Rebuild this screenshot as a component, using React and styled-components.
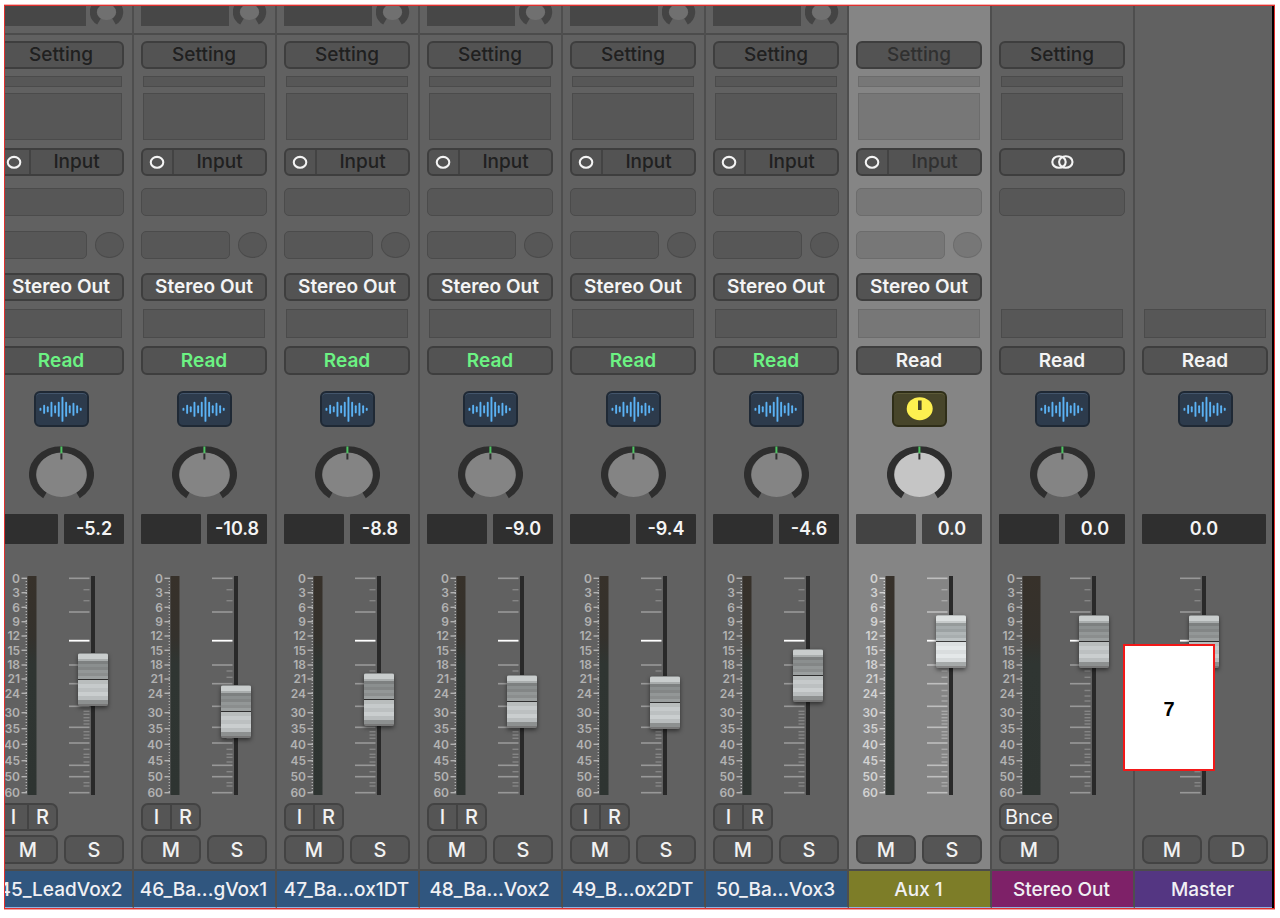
import React, { useState } from 'react';
import styled, { createGlobalStyle } from 'styled-components';

const GlobalStyle = createGlobalStyle`
  *, *::before, *::after {
    box-sizing: border-box;
  }

  body {
    margin: 0;
    background: #fff;
    font-family: Inter, 'Liberation Sans', sans-serif;
  }

  button, input {
    font-family: inherit;
    margin: 0;
    padding: 0;
  }
`;

const Page = styled.main`
  padding: 5px 5px 8px 4px;
`;

const Mixer = styled.div`
  display: flex;
  justify-content: flex-end;
  overflow: hidden;
  border: 1px solid #e0302e;
  box-shadow: 0 -1px 0 #f8b4b4, 0 1px 0 #f0a0a0;
  background: linear-gradient(#000, #000) right / 2px 100% no-repeat, #616161;
  padding-right: 2px;
`;

const StripBox = styled.section`
  flex: 1 0 ${props => (props.$last ? 137 : 143)}px;
  display: flex;
  flex-direction: column;
  background: ${props => (props.$selected ? '#858585' : '#616161')};
  border-right: ${props => (props.$last ? 'none' : '2px solid #4e4e4e')};
  border-bottom: 1px solid #8fb4e0;
`;

const SendArea = styled.div`
  display: flex;
  justify-content: space-between;
  height: 29px;
  padding: 0 8px 0 7px;
  border-bottom: 2px solid ${props => (props.$line ? '#4c4c4c' : 'transparent')};
`;

const SendSlot = styled.div`
  width: 88px;
  height: 20px;
  background: #474747;
`;

const Rack = styled.div`
  display: flex;
  flex-direction: column;
  padding: 6px ${props => (props.$last ? 4 : 8)}px 5px 7px;
`;

const Row = styled.div`
  display: ${props => (props.$split ? 'grid' : 'flex')};
  grid-template-columns: 1fr 1fr;
  gap: ${props => (props.$split ? 6 : 8)}px;
  justify-content: center;
  align-items: stretch;
  height: ${props => props.$height}px;
  margin-bottom: ${props => props.$below || 0}px;
`;

const PlugButton = styled.button`
  flex: 1;
  min-width: 0;
  border: 2px solid #3e3e3e;
  border-radius: 6px;
  background: #535353;
  color: ${props => props.$color || '#f4f4f4'};
  font-size: 19px;
  line-height: 22px;
  font-weight: ${props => (props.$dim ? 500 : 600)};
  white-space: nowrap;
`;

const InputButton = styled(PlugButton)`
  display: flex;
  align-items: stretch;

  svg {
    flex: none;
    width: 31px;
    height: 24px;
    border-right: 2px solid #434343;
  }

  span {
    flex: 1;
    align-self: center;
  }
`;

const FormatButton = styled(PlugButton)`
  display: flex;
  align-items: center;
  justify-content: center;
`;

const EmptySlot = styled.div`
  flex: 1;
  margin: 0 ${props => (props.$round ? 0 : 2)}px;
  border: 1px solid ${props => (props.$selected ? '#6c6c6c' : '#4b4b4b')};
  border-radius: ${props => (props.$round ? 5 : 0)}px;
  background: ${props => (props.$selected ? '#777' : '#575757')};
`;

const SendKnob = styled.div`
  width: 29px;
  height: 26px;
  align-self: center;
  border: 1px solid ${props => (props.$selected ? '#6c6c6c' : '#4b4b4b')};
  border-radius: 50%;
  background: ${props => (props.$selected ? '#777' : '#575757')};
`;

const TypeIcon = styled.div`
  display: flex;
  width: 55px;
  height: 36px;
  border: 2px solid ${props => (props.$yellow ? '#2f2e18' : '#1f2935')};
  border-radius: 6px;
  background: ${props => (props.$yellow ? '#47452a' : '#2d3b4c')};
  box-shadow: inset 0 1px 0 ${props => (props.$yellow ? '#5c5a38' : '#43556b')};
`;

const Readout = styled.output`
  grid-column: ${props => (props.$wide ? '1 / -1' : 'auto')};
  margin-right: ${props => (props.$wide ? 2 : 0)}px;
  border-radius: 1px;
  background: ${props => (props.$selected ? '#434343' : '#2f2f2f')};
  color: #f4f4f4;
  font-size: 18px;
  font-weight: 600;
  line-height: 30px;
  text-align: center;
`;

const FaderArea = styled.div`
  position: relative;
  display: flex;
  justify-content: ${props => (props.$center ? 'center' : 'space-between')};
  height: 219px;
  margin-bottom: 8px;
  padding-right: ${props => (props.$center ? 12 : 16)}px;
`;

const FaderBox = styled.div`
  display: grid;
  width: 40px;

  > * {
    grid-area: 1 / 1;
  }
`;

const cap = `linear-gradient(
  #8c8f8f 0 1px, #c9cdcd 1px 6px, #a9adad 6px 8px, #7d8080 8px 11px,
  #8b8f8f 11px 14px, #838686 14px 17px, #939797 17px 20px, #8b8e8e 20px 23px,
  #9b9f9f 23px 26px, #2e2e2e 26px 27px, #b9bdbd 27px 31px, #c6cacb 31px 35px,
  #bcc0c1 35px 39px, #cacecf 39px 43px, #b9bdbe 43px 47px, #8d9090 47px 51px, #777 51px 53px
)`;

const brightCap = `linear-gradient(
  #b6baba 0 1px, #dde1e1 1px 6px, #c6caca 6px 8px, #969b9b 8px 11px,
  #a5abac 11px 14px, #9ca2a3 14px 17px, #b0b6b7 17px 20px, #a8aeaf 20px 23px,
  #bcc2c3 23px 26px, #3a3a3a 26px 27px, #dce0e1 27px 31px, #e4e8e9 31px 35px,
  #d9ddde 35px 39px, #e4e8e9 39px 43px, #d6dadb 43px 47px, #a5a9a9 47px 51px, #868686 51px 53px
)`;

const Fader = styled.input`
  justify-self: end;
  appearance: none;
  writing-mode: vertical-lr;
  direction: rtl;
  width: 30px;
  height: 219px;
  background: linear-gradient(#292929, #292929) center / 4px 100% no-repeat;

  &::-webkit-slider-runnable-track {
    width: 30px;
    height: 219px;
    background: none;
  }

  &::-webkit-slider-thumb {
    appearance: none;
    width: 30px;
    height: 53px;
    border-radius: 2px;
    background: ${props => (props.$bright ? brightCap : cap)};
    box-shadow: 0 2px 4px rgba(0, 0, 0, 0.5);
  }
`;

const Square = styled.button`
  border: 2px solid #434343;
  border-radius: 7px;
  background: #555;
  color: #f2f2f2;
  font-size: 20px;
  font-weight: 500;
  line-height: 22px;
  white-space: nowrap;
`;

const BounceButton = styled(Square)`
  font-weight: 400;
`;

const ButtonPair = styled.div`
  display: grid;
  grid-template-columns: 1fr 1fr;

  button:first-child {
    border-right-width: 1px;
    border-radius: 7px 0 0 7px;
  }

  button:last-child {
    border-left-width: 1px;
    border-radius: 0 7px 7px 0;
  }
`;

const TrackName = styled.h2`
  display: flex;
  justify-content: center;
  margin: 0;
  height: 38px;
  padding-right: 2px;
  border-top: 2px solid #4c4c4c;
  background: ${props => props.$color};
  color: #f0f0f4;
  font-size: 19px;
  font-weight: 500;
  line-height: 38px;
  white-space: nowrap;
`;

const Callout = styled.div`
  position: absolute;
  z-index: 2;
  top: 68px;
  left: -19px;
  display: flex;
  align-items: center;
  justify-content: center;
  width: 92px;
  height: 127px;
  padding-top: 3px;
  border: 2px solid #f21818;
  background: #fff;
  color: #000;
  font-family: 'Liberation Sans', Arial, sans-serif;
  font-size: 20px;
  font-weight: bold;
`;

// [x position, bar height]
const WAVE = [
  [4, 3], [7.7, 9], [11.3, 6], [15, 15], [18.7, 8], [22.3, 15],
  [26, 25], [29.7, 15], [33.3, 8], [37, 13], [40.7, 8], [44.3, 3],
];

const WaveGlyph = () => (
  <svg width="51" height="32" viewBox="0 0 51 32" aria-hidden="true">
    {WAVE.map(([x, h]) => (
      <rect key={x} x={x - 0.5} y={16.3 - h / 2} width="1.9" height={h} rx="0.9" fill="#5bb2f4" />
    ))}
  </svg>
);

const KnobGlyph = () => (
  <svg width="51" height="32" viewBox="0 0 51 32" aria-hidden="true">
    <ellipse cx="25.7" cy="15.7" rx="13" ry="11.5" fill="#fdf050" />
    <rect x="24" y="7.5" width="3.6" height="9.5" fill="#47452a" />
  </svg>
);

const PanKnob = ({ bright }) => (
  <svg width="65" height="53" viewBox="0 0 65 53" role="img" aria-label="Pan">
    <path d="M16 49.2 A29 25 0 1 1 49 49.2" fill="none" stroke="#2e2e2e" strokeWidth="7" />
    <ellipse cx="32.5" cy="28.7" rx="25" ry="22.2" fill={bright ? '#c5c5c5' : '#848484'} />
    <rect x="31.4" y="0.5" width="2" height="7" fill="#4fc463" />
    <rect x="31.4" y="7.5" width="2" height="6" fill="#303030" />
  </svg>
);

const SendRing = () => (
  <svg width="34" height="20" viewBox="0 0 34 20" aria-hidden="true">
    <path d="M9 15.6 A13.2 11.5 0 1 1 24 15.6" fill="none" stroke="#444" strokeWidth="7" />
    <ellipse cx="16.5" cy="6" rx="9.5" ry="8" fill="#707070" />
  </svg>
);

const MonoGlyph = () => (
  <svg viewBox="0 0 31 24" aria-hidden="true">
    <ellipse cx="15" cy="12.3" rx="6.7" ry="5.8" fill="none" stroke="#f4f4f4" strokeWidth="2.2" />
  </svg>
);

const StereoGlyph = () => (
  <svg width="24" height="16" viewBox="0 0 24 16" aria-hidden="true">
    <ellipse cx="9" cy="8" rx="6.7" ry="5.8" fill="none" stroke="#f4f4f4" strokeWidth="2.1" />
    <ellipse cx="15.8" cy="8" rx="6.7" ry="5.8" fill="none" stroke="#f4f4f4" strokeWidth="2.1" />
  </svg>
);

const SCALE = [
  [0, 2.3], [3, 16.7], [6, 31.3], [9, 45.7], [12, 60], [15, 74.3], [18, 89], [21, 103],
  [24, 117.3], [30, 136.7], [35, 152.7], [40, 168.3], [45, 184.7], [50, 200.7], [60, 216.7],
];

const Meter = ({ wide, selected }) => {
  const x = wide ? 16 : 22;
  const meterX = x + 7.5;
  const meterWidth = wide ? 18 : 9;
  const color = selected ? '#d2d2d2' : '#b2b2b2';
  return (
    <svg
      width={wide ? 43 : 39}
      height="219"
      viewBox={`0 0 ${wide ? 43 : 39} 219`}
      overflow="visible"
      role="img"
      aria-label="Level meter"
    >
      <defs>
        <linearGradient id="meterFill" x1="0" y1="0" x2="0" y2="1">
          <stop offset="0" stopColor="#37312a" />
          <stop offset="0.28" stopColor="#34312c" />
          <stop offset="0.4" stopColor="#2f3532" />
          <stop offset="1" stopColor="#2e3431" />
        </linearGradient>
      </defs>
      <line x1={x + 6.3} x2={x + 6.3} y1="2" y2="218" stroke={color} strokeWidth="1.4" strokeDasharray="1 2" />
      {SCALE.map(([label, y]) => (
        <g key={label}>
          <text x={x} y={y + 4.4} textAnchor="end" fontSize="12" fontWeight="600" fill={color}>
            {label}
          </text>
          <rect x={x + 1.5} y={y - 0.7} width="5.5" height="1.4" fill={color} />
        </g>
      ))}
      <rect x={meterX} y="0" width={meterWidth} height="219" fill="url(#meterFill)" />
    </svg>
  );
};

const LONG_TICKS = [2.3, 36, 89, 107.7, 130.3, 151.3, 167, 189.3, 200.7, 216.7];
const SHORT_TICKS = [
  13.7, 24.7, 95, 101.3, 114.5, 120, 125, 135.3, 138.3, 141.7, 144.7, 148,
  155.7, 159, 162.3, 173.3, 178.3, 181.3, 186, 195.7, 206.7, 210,
];

const FaderTicks = ({ selected }) => (
  <svg width="22" height="219" viewBox="0 0 22 219" aria-hidden="true">
    <g fill={selected ? '#bebebe' : '#989898'}>
      {LONG_TICKS.map(y => (
        <rect key={y} x="1" y={y - 0.8} width="20.5" height="1.6" />
      ))}
    </g>
    <g fill={selected ? '#a8a8a8' : '#858585'}>
      {SHORT_TICKS.map(y => (
        <rect key={y} x="15.5" y={y - 0.7} width="6" height="1.4" />
      ))}
    </g>
    <rect x="1" y="63.8" width="20.5" height="1.8" fill="#fff" />
  </svg>
);

const STRIPS = [
  { name: '45_LeadVox2', kind: 'audio', level: '-5.2', fader: 89, color: '#30567f' },
  { name: '46_Ba...gVox1', kind: 'audio', level: '-10.8', fader: 57, color: '#30567f' },
  { name: '47_Ba...ox1DT', kind: 'audio', level: '-8.8', fader: 69, color: '#30567f' },
  { name: '48_Ba...Vox2', kind: 'audio', level: '-9.0', fader: 67, color: '#30567f' },
  { name: '49_B...ox2DT', kind: 'audio', level: '-9.4', fader: 66, color: '#30567f' },
  { name: '50_Ba...Vox3', kind: 'audio', level: '-4.6', fader: 93, color: '#30567f' },
  { name: 'Aux 1', kind: 'aux', level: '0.0', fader: 127, color: '#7d7d28' },
  { name: 'Stereo Out', kind: 'output', level: '0.0', fader: 127, color: '#7e2168' },
  { name: 'Master', kind: 'master', level: '0.0', fader: 127, color: '#543682' },
];

const Strip = ({ strip }) => {
  const [position, setPosition] = useState(strip.fader);
  const audio = strip.kind === 'audio';
  const selected = strip.kind === 'aux';
  const output = strip.kind === 'output';
  const master = strip.kind === 'master';
  const track = audio || selected;
  const dimText = selected ? '#303030' : '#202020';

  return (
    <StripBox $selected={selected} $last={master}>
      <SendArea $line={audio}>
        {audio && <SendSlot />}
        {audio && <SendRing />}
      </SendArea>
      <Rack $last={master}>
        <Row $height={28} $below={7}>
          {!master && <PlugButton $dim $color={dimText}>Setting</PlugButton>}
        </Row>
        <Row $height={11} $below={6}>
          {!master && <EmptySlot $selected={selected} />}
        </Row>
        <Row $height={47} $below={8}>
          {!master && <EmptySlot $selected={selected} />}
        </Row>
        <Row $height={28} $below={12}>
          {track && (
            <InputButton $dim $color={dimText}>
              <MonoGlyph />
              <span>Input</span>
            </InputButton>
          )}
          {output && (
            <FormatButton aria-label="Stereo format">
              <StereoGlyph />
            </FormatButton>
          )}
        </Row>
        <Row $height={28} $below={15}>
          {!master && <EmptySlot $round $selected={selected} />}
        </Row>
        <Row $height={28} $below={14}>
          {track && <EmptySlot $round $selected={selected} />}
          {track && <SendKnob $selected={selected} />}
        </Row>
        <Row $height={28} $below={8}>
          {track && <PlugButton>Stereo Out</PlugButton>}
        </Row>
        <Row $height={29} $below={8}>
          <EmptySlot $selected={selected} />
        </Row>
        <Row $height={29} $below={16}>
          <PlugButton $color={audio ? '#6cf283' : '#f4f4f4'}>Read</PlugButton>
        </Row>
        <Row $height={36} $below={19}>
          <TypeIcon $yellow={selected}>{selected ? <KnobGlyph /> : <WaveGlyph />}</TypeIcon>
        </Row>
        <Row $height={53} $below={15}>
          {!master && <PanKnob bright={selected} />}
        </Row>
        <Row $split $height={29} $below={33}>
          {!master && <Readout $selected={selected} />}
          <Readout $selected={selected} $wide={master}>{strip.level}</Readout>
        </Row>
        <FaderArea $center={master}>
          {!master && <Meter wide={output} selected={selected} />}
          <FaderBox>
            <FaderTicks selected={selected} />
            <Fader
              type="range"
              min="0"
              max="166"
              value={position}
              onChange={e => setPosition(Number(e.target.value))}
              aria-label={`${strip.name} volume`}
              $bright={selected}
            />
          </FaderBox>
          {master && <Callout>7</Callout>}
        </FaderArea>
        <Row $split $height={28} $below={4}>
          {audio && (
            <ButtonPair>
              <Square>I</Square>
              <Square>R</Square>
            </ButtonPair>
          )}
          {output && <BounceButton>Bnce</BounceButton>}
        </Row>
        <Row $split $height={29}>
          <Square>M</Square>
          {track && <Square>S</Square>}
          {master && <Square>D</Square>}
        </Row>
      </Rack>
      <TrackName $color={strip.color}>{strip.name}</TrackName>
    </StripBox>
  );
};

const App = () => (
  <Page>
    <GlobalStyle />
    <Mixer>
      {STRIPS.map(strip => (
        <Strip key={strip.name} strip={strip} />
      ))}
    </Mixer>
  </Page>
);

export default App;
